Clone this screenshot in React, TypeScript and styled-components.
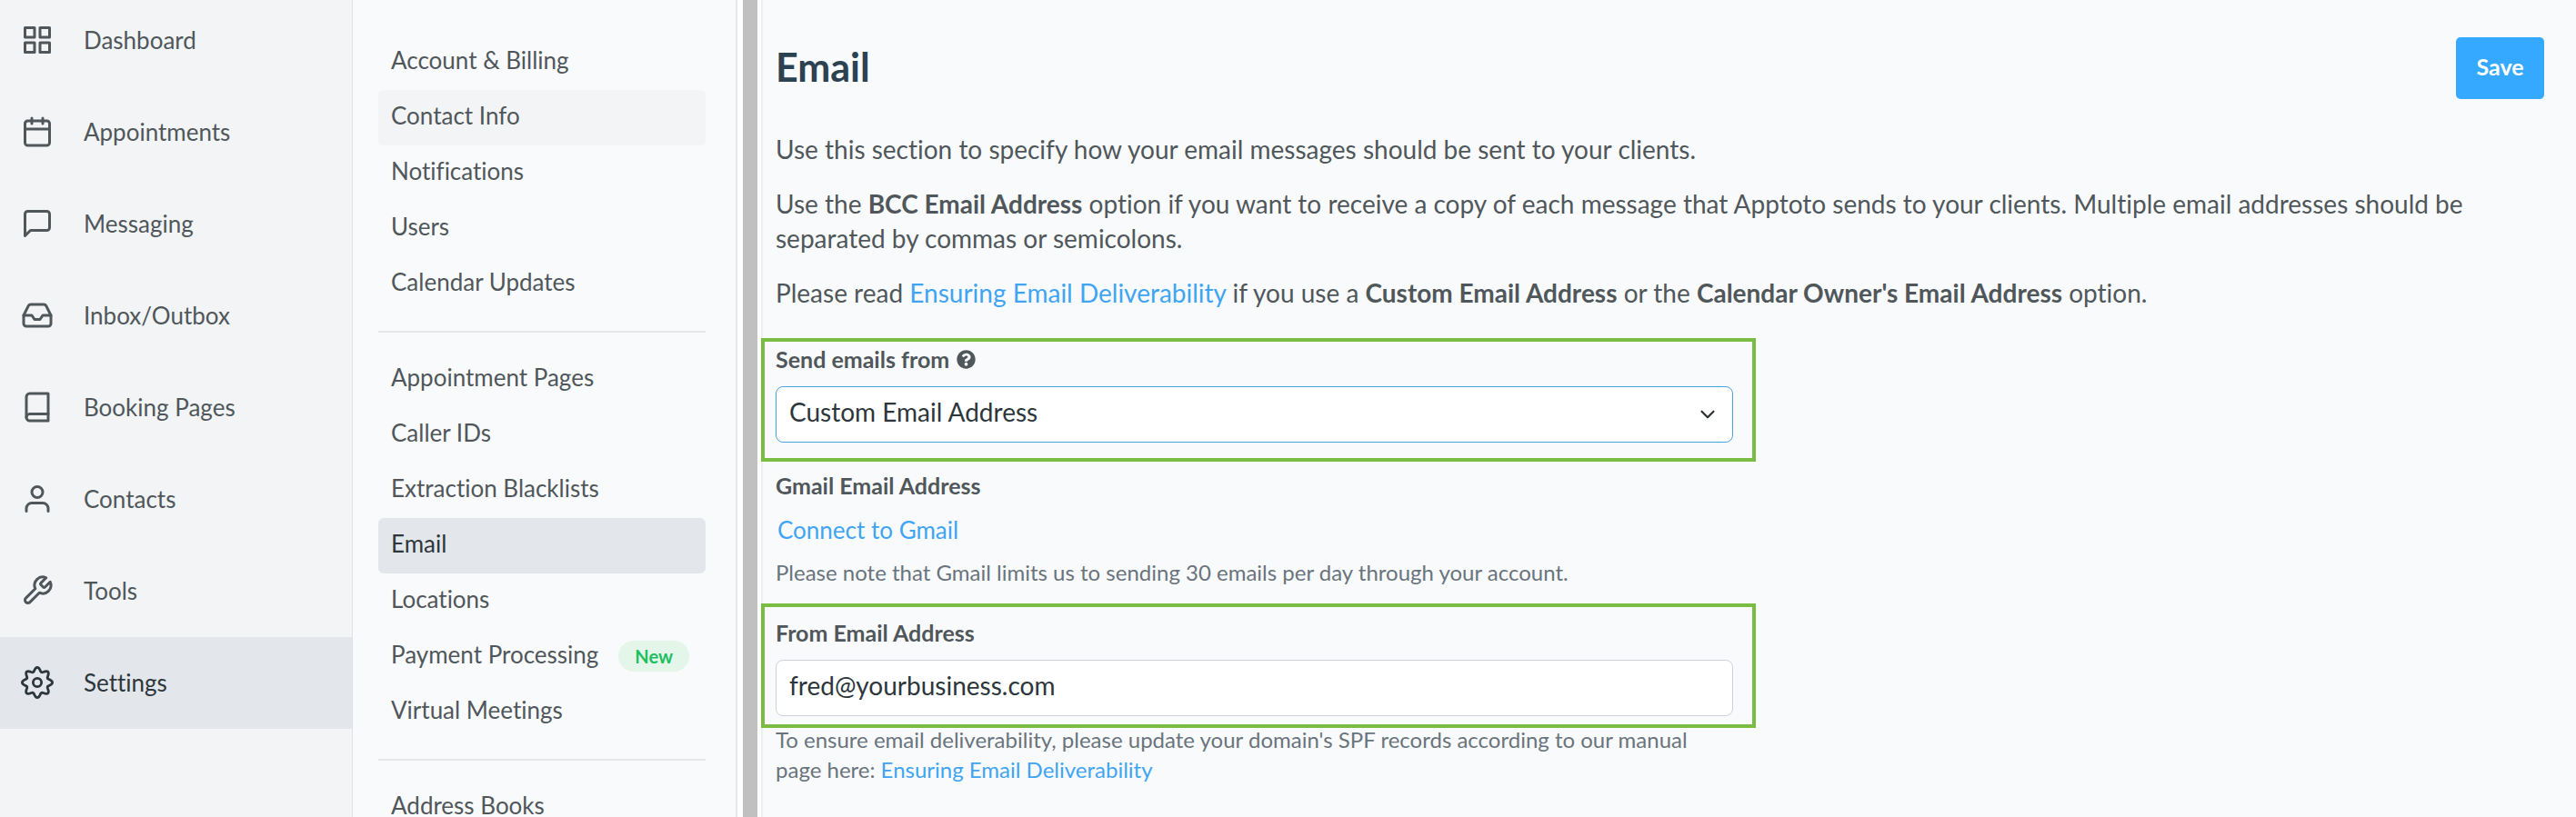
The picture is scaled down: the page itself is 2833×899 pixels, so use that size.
import React from 'react';
import styled, { createGlobalStyle, css } from 'styled-components';
import {
  FiBook,
  FiCalendar,
  FiChevronDown,
  FiGrid,
  FiInbox,
  FiMessageSquare,
  FiTool,
  FiUser,
} from 'react-icons/fi';
import { FaQuestionCircle } from 'react-icons/fa';

const colors = {
  page: '#f9fafc',
  sidebar: '#f2f4f6',
  active: '#e3e6eb',
  hover: '#f3f4f6',
  line: '#e5e7e9',
  text: '#50575b',
  dark: '#2d363b',
  muted: '#6a747c',
  heading: '#2c4251',
  link: '#3fa5f2',
  primary: '#35a9ff',
  highlight: '#7bbc43',
};

const GlobalStyle = createGlobalStyle`
  *, *::before, *::after { box-sizing: border-box; }
  body {
    margin: 0;
    background: ${colors.page};
    color: ${colors.text};
    font-family: Lato, "Liberation Sans", sans-serif;
    font-size: 28px;
    font-variant-ligatures: none;
  }
  button, input, select { font-family: inherit; }
`;

const Shell = styled.div`
  display: flex;
  height: 100vh;
  overflow: hidden;
`;

const Sidebar = styled.nav`
  flex: 0 0 388px;
  background: ${colors.sidebar};
  border-right: 1px solid #dfe1e4;
`;

const SidebarList = styled.ul`
  list-style: none;
  margin: -6px 0 0;
  padding: 0;
`;

const SidebarLink = styled.a<{ $active?: boolean }>`
  display: flex;
  align-items: center;
  gap: 33px;
  height: 101px;
  padding: 0 0 2px 23px;
  font-size: 26px;
  line-height: 32px;
  text-decoration: none;
  color: ${(p) => (p.$active ? colors.dark : colors.text)};
  background: ${(p) => (p.$active ? colors.active : 'transparent')};

  svg {
    width: 36px;
    height: 36px;
  }
`;

const SettingsNav = styled.nav`
  flex: 0 0 423px;
  padding: 38px 33px 0 28px;
  border-right: 2px solid ${colors.line};
  overflow: hidden;
`;

const NavGroup = styled.ul`
  list-style: none;
  margin: 0;
  padding: 0;

  & + & {
    margin-top: 21px;
    padding-top: 21px;
    border-top: 2px solid ${colors.line};
  }
`;

const NavLink = styled.a<{ $state?: 'active' | 'hover' }>`
  display: flex;
  align-items: center;
  gap: 22px;
  height: 61px;
  padding: 0 14px 6px;
  border-radius: 6px;
  font-size: 26px;
  line-height: 32px;
  text-decoration: none;
  color: ${colors.text};
  ${(p) => p.$state === 'hover' && css`background: ${colors.hover};`}
  ${(p) =>
    p.$state === 'active' &&
    css`
      background: ${colors.active};
      color: ${colors.dark};
    `}
`;

const Badge = styled.span`
  margin-top: 4px;
  padding: 0 18px;
  border-radius: 17px;
  background: #e4f5ea;
  color: #1dbf60;
  font-size: 20px;
  font-weight: 700;
  line-height: 34px;
`;

const Divider = styled.div`
  flex: 0 0 26px;
  border: solid #fefefe;
  border-width: 0 4px 0 6px;
  background: #c0c0c0;
`;

const Main = styled.main`
  flex: 1;
  min-width: 0;
  padding: 41px 35px 0 14px;
  border-left: 2px solid #eeeff0;
`;

const Header = styled.header`
  display: flex;
  justify-content: space-between;
  align-items: flex-start;
  margin-bottom: 36px;
`;

const Title = styled.h1`
  margin: 0;
  color: ${colors.heading};
  font-size: 43px;
  line-height: 66px;
`;

const SaveButton = styled.button`
  width: 97px;
  height: 68px;
  padding: 0 0 4px;
  border: 0;
  border-radius: 5px;
  background: ${colors.primary};
  color: #fff;
  font-size: 25px;
  font-weight: 700;
`;

const Paragraph = styled.p`
  margin: 0 0 22px;
  line-height: 38px;
`;

const TextLink = styled.a`
  color: ${colors.link};
  text-decoration: none;
`;

const Form = styled.form`
  max-width: 1053px;
  margin-top: 31px;
`;

const Highlight = styled.div<{ $top: number; $bottom: number }>`
  margin: 0 -25px 0 -16px;
  padding: ${(p) => p.$top}px 21px ${(p) => p.$bottom}px 12px;
  border: 4px solid ${colors.highlight};
`;

const labelText = css`
  display: flex;
  align-items: center;
  gap: 8px;
  font-size: 25px;
  font-weight: 700;
  line-height: 32px;
`;

const Label = styled.label`
  ${labelText}
  margin-bottom: 14px;

  svg {
    width: 21px;
    height: 21px;
  }
`;

const GroupTitle = styled.h2`
  ${labelText}
  margin: 0 0 16px;
`;

const GmailGroup = styled.section`
  padding: 10px 0 18px;
`;

const ConnectLink = styled(TextLink)`
  display: block;
  width: fit-content;
  margin-bottom: 13px;
  padding-left: 2px;
  font-size: 26px;
  line-height: 34px;
`;

const Hint = styled.p`
  margin: 0;
  color: ${colors.muted};
  font-size: 24px;
  line-height: 33px;
`;

const FieldHint = styled(Hint)`
  margin-top: -4px;
`;

const control = css`
  display: block;
  width: 100%;
  height: 62px;
  padding: 0 14px 6px;
  border-radius: 8px;
  background: #fff;
  color: ${colors.dark};
  font-size: 28px;
  outline: none;
`;

const SelectWrap = styled.div`
  position: relative;

  svg {
    position: absolute;
    top: 18px;
    right: 15px;
    width: 26px;
    height: 26px;
    color: #2b2f33;
    pointer-events: none;
  }
`;

const Select = styled.select`
  ${control}
  appearance: none;
  border: 1px solid #4ba3dc;
`;

const Input = styled.input`
  ${control}
  border: 1px solid #cdd1da;
`;

// Eight-lobed cog outline, sampled around its centre.
const cogPath = `M${Array.from({ length: 120 }, (_, i) => {
  const a = (i / 120) * Math.PI * 2;
  const r = 14.4 + 2.2 * Math.cos(8 * a);
  return `${(18 + r * Math.sin(a)).toFixed(2)} ${(18 - r * Math.cos(a)).toFixed(2)}`;
}).join('L')}Z`;

const CogIcon = () => (
  <svg viewBox="0 0 36 36" fill="none" stroke="currentColor" strokeWidth="2.8" strokeLinejoin="round" aria-hidden="true">
    <path d={cogPath} />
    <circle cx="18" cy="18" r="4.6" />
  </svg>
);

const sections = [
  { label: 'Dashboard', Icon: FiGrid },
  { label: 'Appointments', Icon: FiCalendar },
  { label: 'Messaging', Icon: FiMessageSquare },
  { label: 'Inbox/Outbox', Icon: FiInbox },
  { label: 'Booking Pages', Icon: FiBook },
  { label: 'Contacts', Icon: FiUser },
  { label: 'Tools', Icon: FiTool },
  { label: 'Settings', Icon: CogIcon, active: true },
];

type NavItem = { label: string; state?: 'active' | 'hover'; badge?: string };

const settingsGroups: NavItem[][] = [
  [
    { label: 'Account & Billing' },
    { label: 'Contact Info', state: 'hover' },
    { label: 'Notifications' },
    { label: 'Users' },
    { label: 'Calendar Updates' },
  ],
  [
    { label: 'Appointment Pages' },
    { label: 'Caller IDs' },
    { label: 'Extraction Blacklists' },
    { label: 'Email', state: 'active' },
    { label: 'Locations' },
    { label: 'Payment Processing', badge: 'New' },
    { label: 'Virtual Meetings' },
  ],
  [{ label: 'Address Books' }],
];

export default function App() {
  return (
    <>
      <GlobalStyle />
      <Shell>
        <Sidebar aria-label="Main">
          <SidebarList>
            {sections.map(({ label, Icon, active }) => (
              <li key={label}>
                <SidebarLink href="#" $active={active}>
                  <Icon />
                  {label}
                </SidebarLink>
              </li>
            ))}
          </SidebarList>
        </Sidebar>

        <SettingsNav aria-label="Settings">
          {settingsGroups.map((group) => (
            <NavGroup key={group[0].label}>
              {group.map(({ label, state, badge }) => (
                <li key={label}>
                  <NavLink href="#" $state={state}>
                    {label}
                    {badge && <Badge>{badge}</Badge>}
                  </NavLink>
                </li>
              ))}
            </NavGroup>
          ))}
        </SettingsNav>

        <Divider />

        <Main>
          <Header>
            <Title>Email</Title>
            <SaveButton type="submit" form="email-settings">Save</SaveButton>
          </Header>

          <Paragraph>
            Use this section to specify how your email messages should be sent to your clients.
          </Paragraph>
          <Paragraph>
            Use the <strong>BCC Email Address</strong> option if you want to receive a copy of each
            message that Apptoto sends to your clients. Multiple email addresses should be separated
            by commas or semicolons.
          </Paragraph>
          <Paragraph>
            Please read <TextLink href="#">Ensuring Email Deliverability</TextLink> if you use a{' '}
            <strong>Custom Email Address</strong> or the{' '}
            <strong>Calendar Owner's Email Address</strong> option.
          </Paragraph>

          <Form id="email-settings">
            <Highlight $top={3} $bottom={17}>
              <Label htmlFor="send-from">
                Send emails from <FaQuestionCircle />
              </Label>
              <SelectWrap>
                <Select id="send-from" defaultValue="custom">
                  <option value="custom">Custom Email Address</option>
                </Select>
                <FiChevronDown />
              </SelectWrap>
            </Highlight>

            <GmailGroup>
              <GroupTitle>Gmail Email Address</GroupTitle>
              <ConnectLink href="#">Connect to Gmail</ConnectLink>
              <Hint>
                Please note that Gmail limits us to sending 30 emails per day through your account.
              </Hint>
            </GmailGroup>

            <Highlight $top={12} $bottom={9}>
              <Label htmlFor="from-email">From Email Address</Label>
              <Input id="from-email" type="email" defaultValue="fred@yourbusiness.com" />
            </Highlight>
            <FieldHint>
              To ensure email deliverability, please update your domain's SPF records according to
              our manual page here: <TextLink href="#">Ensuring Email Deliverability</TextLink>
            </FieldHint>
          </Form>
        </Main>
      </Shell>
    </>
  );
}
